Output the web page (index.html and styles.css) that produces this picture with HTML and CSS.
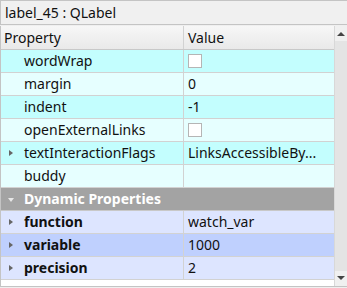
FILE: index.html
```html
<!DOCTYPE html>
<html lang="en">
  <head>
    <meta name="viewport" content="width=device-width" />
    <title>Property Editor</title>
    <link rel="stylesheet" href="styles.css">
  </head>
  <body>
    <div class="editor">
      <div class="object-name">label_45 : QLabel</div>
      <div class="tree">
        <div class="table">
          <div class="row head">
            <div class="cell">Property</div>
            <div class="cell">Value</div>
          </div>
          <div class="row cyan">
            <div class="cell name">wordWrap</div>
            <div class="cell"><span class="check"></span></div>
          </div>
          <div class="row cyan-light">
            <div class="cell name">margin</div>
            <div class="cell">0</div>
          </div>
          <div class="row cyan">
            <div class="cell name">indent</div>
            <div class="cell">-1</div>
          </div>
          <div class="row cyan-light">
            <div class="cell name">openExternalLinks</div>
            <div class="cell"><span class="check"></span></div>
          </div>
          <div class="row cyan">
            <div class="cell name"><span class="arrow right"></span>textInteractionFlags</div>
            <div class="cell">LinksAccessibleBy...</div>
          </div>
          <div class="row cyan-light">
            <div class="cell name">buddy</div>
            <div class="cell"></div>
          </div>
          <div class="row group">
            <div class="cell name"><span class="arrow down"></span>Dynamic Properties</div>
          </div>
          <div class="row lavender">
            <div class="cell name bold"><span class="arrow right"></span>function</div>
            <div class="cell">watch_var</div>
          </div>
          <div class="row lavender-dark">
            <div class="cell name bold"><span class="arrow right"></span>variable</div>
            <div class="cell">1000</div>
          </div>
          <div class="row lavender">
            <div class="cell name bold"><span class="arrow right"></span>precision</div>
            <div class="cell">2</div>
          </div>
        </div>
        <div class="scrollbar">
          <div class="step up"></div>
          <div class="track"></div>
          <div class="step down"></div>
        </div>
      </div>
    </div>
  </body>
</html>
```

FILE: styles.css
```css
body {
  margin: 0;
  background: #efefef;
  font-family: "Noto Sans", "DejaVu Sans", sans-serif;
  font-size: 14px;
  color: #111;
}

.editor {
  width: 347px;
  height: 288px;
  display: flex;
  flex-direction: column;
}

.object-name {
  height: 23px;
  line-height: 23px;
  padding-left: 4px;
  border: 1px solid #c4c4c4;
  border-right: none;
  background: #f0f0f0;
  margin-bottom: 1px;
}

.tree {
  display: flex;
  height: 260px;
  border-left: 1px solid #c4c4c4;
  border-bottom: 1px solid #c4c4c4;
  background: #fff;
}

.table {
  width: 334px;
  display: flex;
  flex-direction: column;
}

.row {
  display: grid;
  grid-template-columns: 182px 1fr;
  height: 22px;
  border-bottom: 1px solid #d2d2d2;
}

.cell {
  line-height: 22px;
  white-space: nowrap;
  overflow: hidden;
  display: flex;
  align-items: center;
}

.row .cell + .cell {
  border-left: 1px solid #d2d2d2;
  padding-left: 4px;
}

.head {
  height: 23px;
  background: linear-gradient(#f7f7f7, #e9e9e9);
  border-bottom-color: #c8c8c8;
}

.head .cell {
  padding-left: 3px;
  line-height: 23px;
}

.name {
  padding-left: 23px;
  position: relative;
}

.cyan { background: #c3fefe; }
.cyan-light { background: #e6ffff; }
.lavender { background: #dde5ff; }
.lavender-dark { background: #bfd0fe; }

.group {
  display: flex;
  background: #a3a3a3;
  border-bottom-color: #c8c8c8;
}

.group .name {
  color: #fff;
  font-weight: bold;
}

.bold { font-weight: bold; }

.arrow {
  position: absolute;
  left: 8px;
  top: 8px;
  width: 0;
  height: 0;
}

.arrow.right {
  border-top: 3px solid transparent;
  border-bottom: 3px solid transparent;
  border-left: 4px solid #666;
}

.arrow.down {
  top: 10px;
  left: 7px;
  border-left: 3px solid transparent;
  border-right: 3px solid transparent;
  border-top: 4px solid #e8e8e8;
}

.check {
  border: 1px solid #b5b5b5;
  background: #fff;
  box-sizing: border-box;
  width: 14px;
  height: 14px;
}

.scrollbar {
  width: 12px;
  display: flex;
  flex-direction: column;
  background: #ececec;
  border-left: 1px solid #d8d8d8;
}

.step {
  height: 15px;
  display: flex;
  justify-content: center;
  background: #f0f0f0;
}

.track {
  flex: 1;
  background: #e4e4e4;
}

.step.up::after {
  content: "";
  margin-top: 6px;
  border-left: 4px solid transparent;
  border-right: 4px solid transparent;
  border-bottom: 4px solid #444;
  height: 0;
}

.step.down::after {
  content: "";
  margin-top: 5px;
  border-left: 4px solid transparent;
  border-right: 4px solid transparent;
  border-top: 4px solid #444;
  height: 0;
}
```
